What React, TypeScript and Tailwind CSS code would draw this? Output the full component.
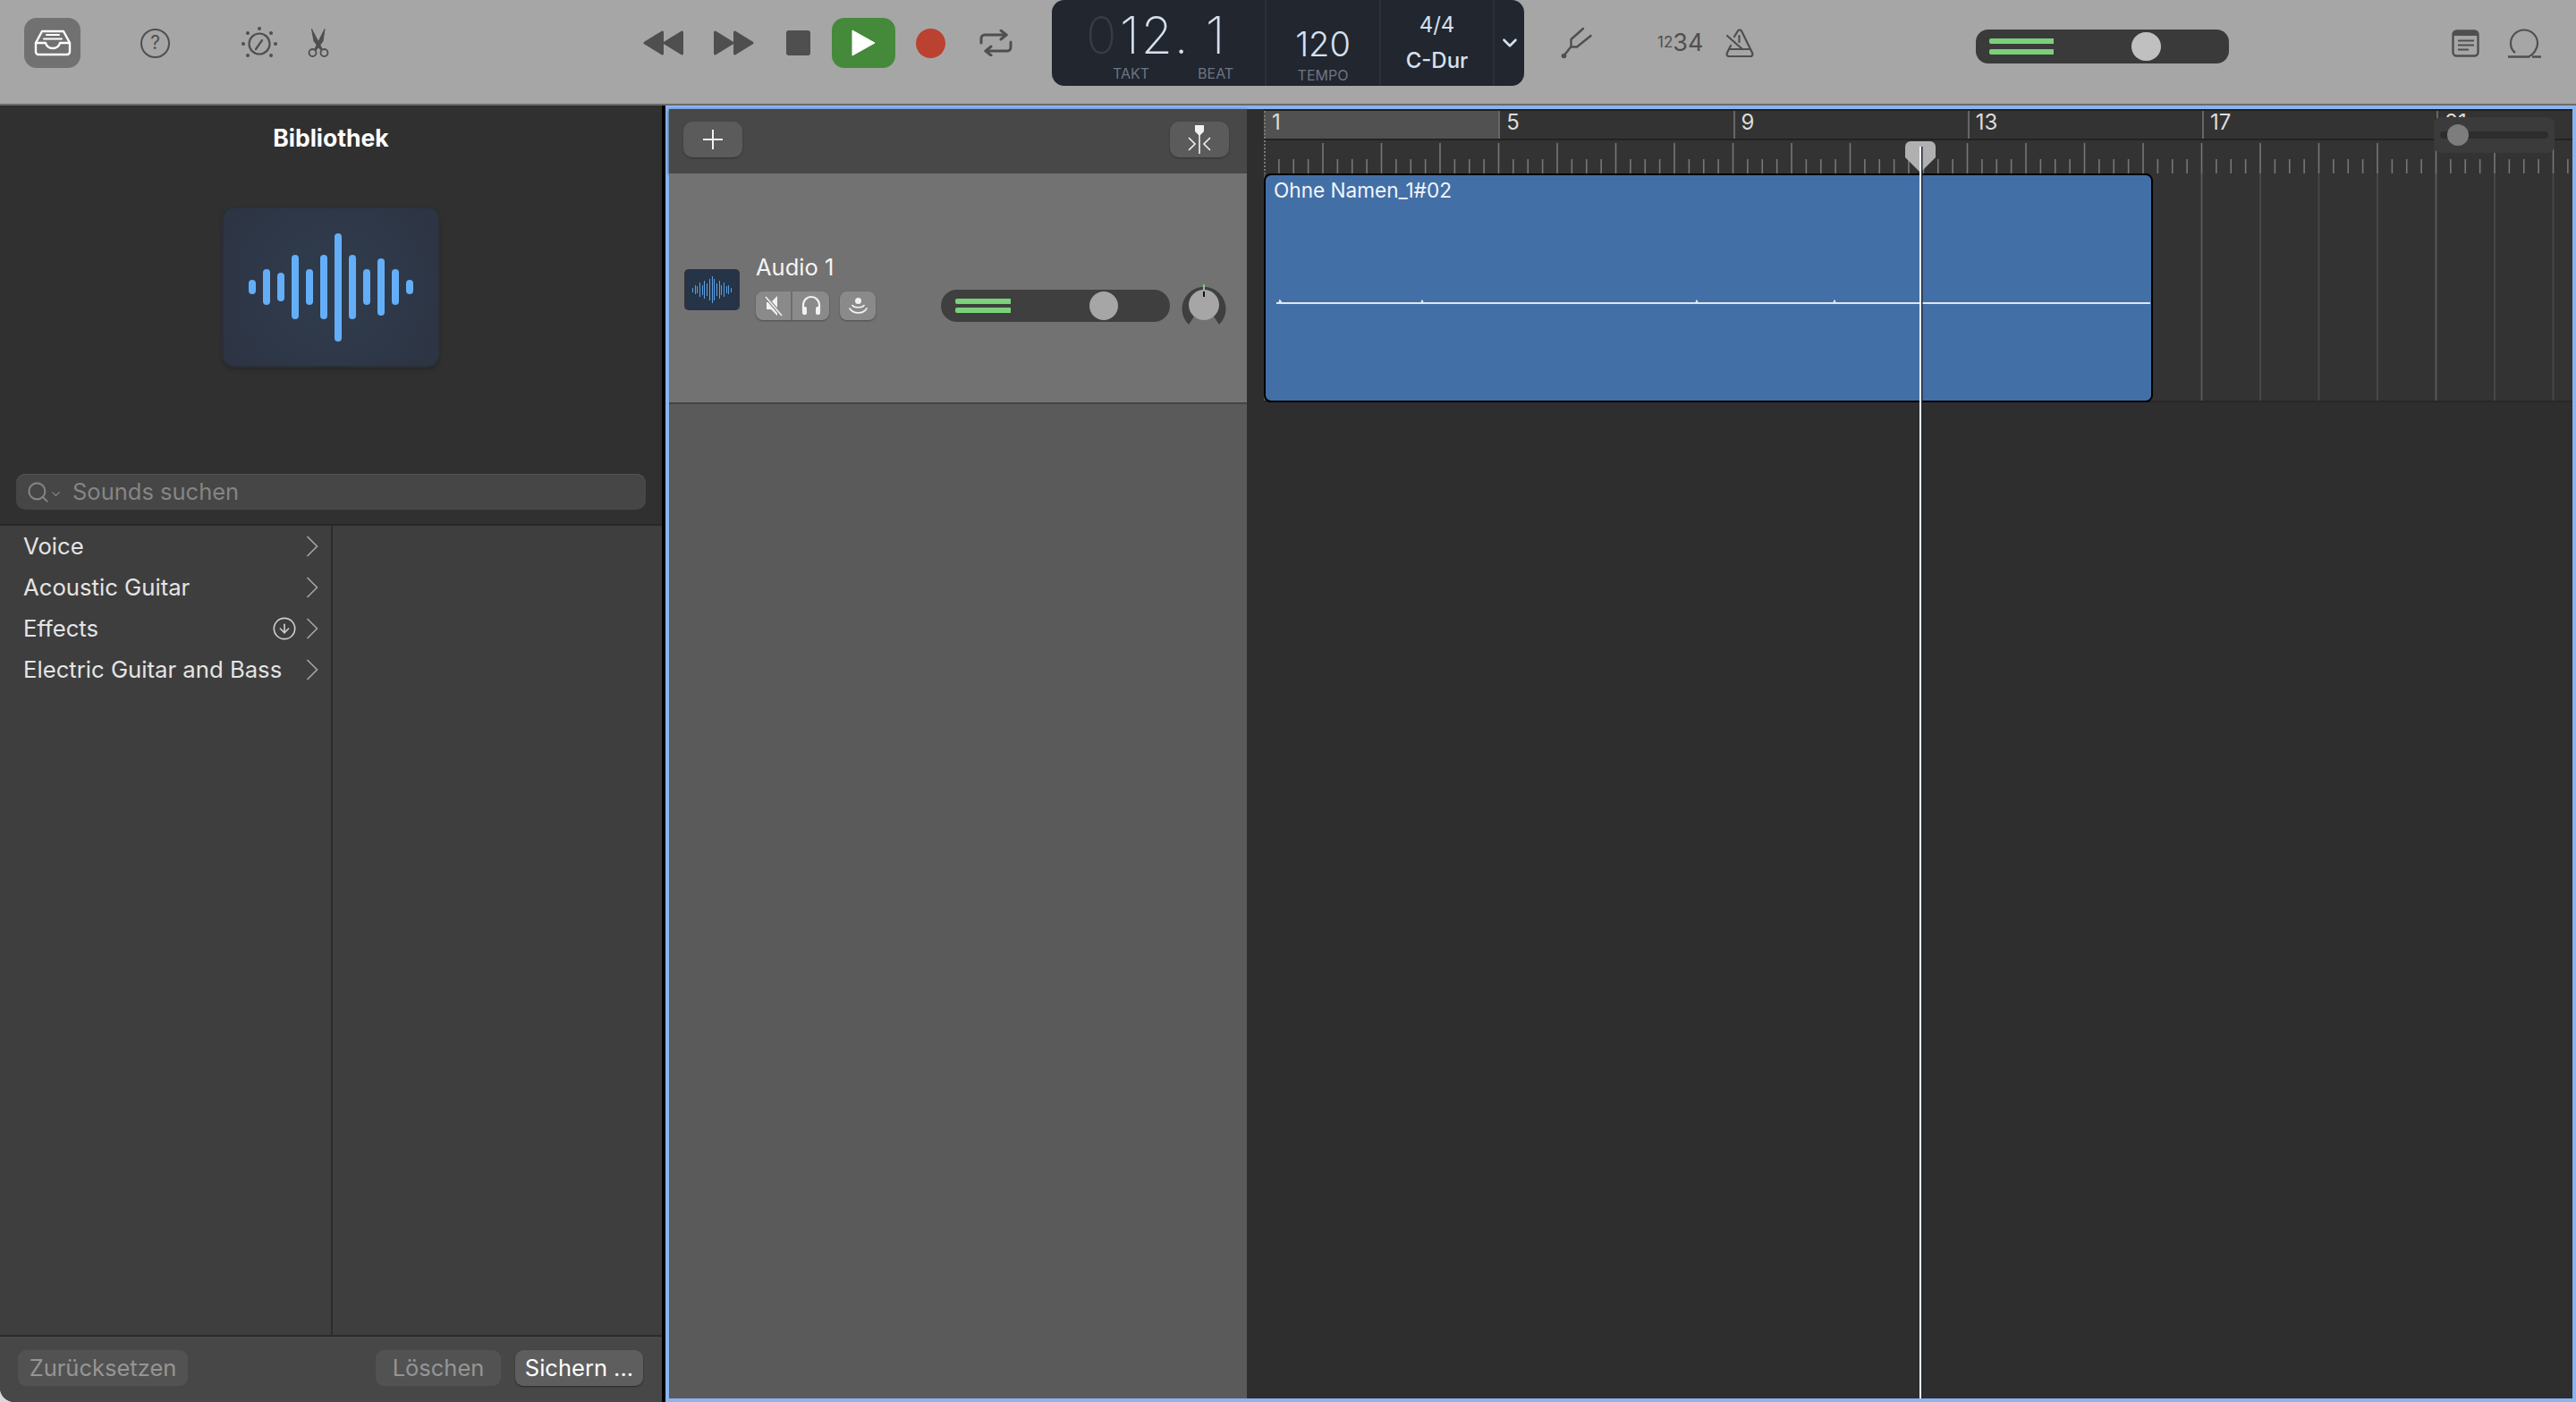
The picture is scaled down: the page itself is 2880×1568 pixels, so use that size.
import { CircleArrowDown, Search, ChevronDown } from "lucide-react";

const ICON = "#4f4f4f";
const barNumbers = [1, 5, 9, 13, 17, 21];
const libraryRows = ["Voice", "Acoustic Guitar", "Effects", "Electric Guitar and Bass"];
const bigWave = [16, 40, 32, 72, 40, 72, 121, 72, 40, 64, 40, 16];
const smallWave = [5, 10, 8, 16, 11, 20, 14, 24, 30, 24, 14, 20, 11, 16, 8, 10, 5];

function InboxIcon() {
  return (
    <svg width="42" height="30" viewBox="0 0 42 30" fill="none" stroke="#fff" strokeWidth="2.4" strokeLinejoin="round" strokeLinecap="round">
      <path d="M9 2H33L40 15V25a3 3 0 0 1-3 3H5a3 3 0 0 1-3-3V15Z" />
      <path d="M2 15H13c1 4 4 6 8 6s7-2 8-6H40" />
      <path d="M14 6H28M11 10.500H31" strokeWidth="2" />
    </svg>
  );
}

function KnobIcon() {
  return (
    <svg width="40" height="36" viewBox="0 0 40 36" fill="none" stroke={ICON} strokeWidth="2.2">
      <circle cx="20" cy="19" r="11.500" />
      <path d="M16 25L23 15" strokeLinecap="round" />
      <g fill={ICON} stroke="none">
        <circle cx="20" cy="2" r="2" />
        <circle cx="7" cy="7" r="2" />
        <circle cx="33" cy="7" r="2" />
        <circle cx="2" cy="19" r="2" />
        <circle cx="38" cy="19" r="2" />
        <circle cx="7" cy="32" r="2" />
        <circle cx="33" cy="32" r="2" />
      </g>
    </svg>
  );
}

function ScissorsIcon() {
  return (
    <svg width="24" height="32" viewBox="0 0 24 32" fill="none" stroke={ICON} strokeWidth="1.800">
      <circle cx="5.500" cy="27" r="4" />
      <circle cx="18.500" cy="27" r="4" />
      <path d="M7.500 23.500L19 0.500L17 14L9.500 24" fill={ICON} strokeLinejoin="round" strokeWidth="1" />
      <path d="M16.500 23.500L4.500 0.500L7 14L14.500 24" fill={ICON} strokeLinejoin="round" strokeWidth="1" />
    </svg>
  );
}

function SkipIcon({ back }: { back?: boolean }) {
  return (
    <svg width="46" height="30" viewBox="0 0 46 30" fill={ICON} stroke={ICON} strokeWidth="3" strokeLinejoin="round" className={back ? "rotate-180" : ""}>
      <path d="M2.500 3L22 15L2.500 27Z" />
      <path d="M24.500 3L44 15L24.500 27Z" />
    </svg>
  );
}

function CycleIcon() {
  return (
    <svg width="37" height="30" viewBox="0 0 37 30" fill="none" stroke={ICON} strokeWidth="3" strokeLinecap="round" strokeLinejoin="round">
      <path d="M2 15V10a4 4 0 0 1 4-4H30" />
      <path d="M24 1L30 6L24 11" />
      <path d="M35 14V20a4 4 0 0 1-4 4H7" />
      <path d="M13 19L7 24L13 29" />
    </svg>
  );
}

function ForkIcon() {
  return (
    <svg width="36" height="36" viewBox="0 0 36 36" fill="none" stroke={ICON} strokeWidth="2.400" strokeLinecap="round" strokeLinejoin="round">
      <path d="M25 2L11.500 14V22L3 33" />
      <path d="M11.500 22.500H18L33.500 10" />
      <circle cx="3.500" cy="32.500" r="2.800" fill={ICON} stroke="none" />
    </svg>
  );
}

function MetronomeIcon() {
  return (
    <svg width="32" height="32" viewBox="0 0 32 32" fill="none" stroke={ICON} strokeWidth="2.200" strokeLinejoin="round" strokeLinecap="round">
      <path d="M10 9L14 2.500C15 1 17 1 18 2.500L30 27C31 29 30 31 28 31H4C2 31 1 29 2 27L6 19" />
      <path d="M4 23H28" />
      <path d="M2 8L19 23" />
      <path d="M15.500 8V15" />
    </svg>
  );
}

function NotesIcon() {
  return (
    <svg width="31" height="31" viewBox="0 0 31 31" fill="none">
      <rect x="1.500" y="1.500" width="28" height="28" rx="4" stroke={ICON} strokeWidth="2.400" />
      <path d="M2 5a3 3 0 0 1 3-3H26a3 3 0 0 1 3 3V7H2Z" fill={ICON} />
      <path d="M7 12.500H25M7 17.500H25M7 22.500H19" stroke={ICON} strokeWidth="1.800" />
    </svg>
  );
}

function LoopIcon() {
  return (
    <svg width="37" height="33" viewBox="0 0 37 33" fill="none" stroke={ICON} strokeWidth="2.200">
      <path d="M8 27C4 24 3 20 3 16.500C3 8 10 1.500 18 1.500C26 1.500 33 8 33 16.500C33 22 29 29 23 31.500" />
      <path d="M0 31.500H24M27 31.500H37" strokeWidth="2.400" />
    </svg>
  );
}

function Chevron() {
  return (
    <svg width="14" height="24" viewBox="0 0 14 24" fill="none" stroke="#a5a5a5" strokeWidth="1.600">
      <path d="M1.500 1L12.500 12L1.500 23" />
    </svg>
  );
}

function MuteIcon() {
  return (
    <svg width="22" height="24" viewBox="0 0 22 24" fill="none">
      <path d="M3 8H8L15 1V23L8 16H3Z" fill="#f2f2f2" />
      <path d="M2 2L20 23" stroke="#8a8a8a" strokeWidth="4" />
      <path d="M2 2L20 23" stroke="#f2f2f2" strokeWidth="1.500" />
    </svg>
  );
}

function HeadphoneIcon() {
  return (
    <svg width="24" height="24" viewBox="0 0 24 24" fill="none" stroke="#f2f2f2" strokeWidth="2.200">
      <path d="M3 17V11a9 9 0 0 1 18 0V17" />
      <rect x="2" y="13" width="5" height="9" rx="2" fill="#f2f2f2" stroke="none" />
      <rect x="17" y="13" width="5" height="9" rx="2" fill="#f2f2f2" stroke="none" />
    </svg>
  );
}

function MonitorIcon() {
  return (
    <svg width="21" height="18" viewBox="0 0 21 18" fill="none" stroke="#f2f2f2" strokeWidth="1.600" strokeLinecap="round">
      <circle cx="10.500" cy="3.500" r="3.500" fill="#f2f2f2" stroke="none" />
      <path d="M4 8.500C6 11.500 15 11.500 17 8.500" />
      <path d="M1 12C5 18.500 16 18.500 20 12" />
    </svg>
  );
}

function CatchIcon() {
  return (
    <svg width="26" height="34" viewBox="0 0 26 34" fill="none" stroke="#f2f2f2" strokeWidth="1.600">
      <path d="M8 1H18V8L13 13L8 8Z" fill="#f2f2f2" stroke="none" />
      <path d="M13 10V33" />
      <path d="M1 15L8 22L1 29M25 15L18 22L25 29" />
    </svg>
  );
}

function TrackKnob() {
  return (
    <svg width="50" height="48" viewBox="0 0 50 48" className="shrink-0">
      <path d="M8 47A24.500 24.500 0 1 1 42 47L36 38H14Z" fill="#3f3f3f" />
      <ellipse cx="25" cy="25" rx="17" ry="17" fill="#a6a6a6" />
      <path d="M25 2V8" stroke="#7ad17a" strokeWidth="2" />
      <path d="M25 10V16" stroke="#111" strokeWidth="2" />
    </svg>
  );
}

function LevelBars({ width, height, gap }: { width: string; height: string; gap: string }) {
  return (
    <div className={`flex flex-col ${width} ${gap}`}>
      <div className={`${height} rounded-l-[2px] bg-[#7ad17a]`} />
      <div className={`${height} rounded-l-[2px] bg-[#7ad17a]`} />
    </div>
  );
}

function RulerTicks() {
  const ticks = Array.from({ length: 90 }, (_, i) => i + 1);
  return (
    <svg width="1463" height="37" className="block">
      <line x1="1" x2="1" y1="0" y2="37" stroke="#777" strokeWidth="2" strokeDasharray="2 2" />
      {ticks.map((i) => {
        const x = i * 16.375;
        const isBar = i % 4 === 0;
        return (
          <line key={i} x1={x + 0.5} x2={x + 0.5} y1={isBar ? 3 : 21} y2="37" stroke="#777" strokeWidth="1.600" />
        );
      })}
    </svg>
  );
}

function LaneGrid() {
  const bars = Array.from({ length: 23 }, (_, i) => i);
  return (
    <svg width="1463" height="254" className="absolute left-0 top-0">
      {bars.map((i) => (
        <line key={i} x1={i * 65.5 + 0.5} x2={i * 65.5 + 0.5} y1="0" y2="254" stroke={i % 4 === 0 ? "#575757" : "#474747"} strokeWidth="2" />
      ))}
    </svg>
  );
}

function FooterButton({ label, className }: { label: string; className: string }) {
  return (
    <div className={`flex h-10 items-center justify-center rounded-[9px] text-[25.500px] ${className}`}>{label}</div>
  );
}

function LibraryPanel() {
  return (
    <aside className="flex w-[744px] shrink-0 flex-col overflow-hidden rounded-bl-[16px] border-r-4 border-black bg-[#303030]">
      <div className="flex h-[470px] shrink-0 flex-col items-center border-b-2 border-[#282828] pt-[22px]">
        <h1 className="text-[26.500px] leading-7 font-bold text-white">Bibliothek</h1>
        <div className="mt-[65px] flex h-[176px] w-[240px] items-center justify-center gap-2 rounded-[12px] bg-[radial-gradient(circle,#2f3a4b_30%,#2d3443)] shadow-[0_0_0_2px_#2a2f38,0_3px_5px_#222]">
          {bigWave.map((h, i) => (
            <div key={i} className="w-2 rounded-full bg-[#64aef8]" style={{ height: h }} />
          ))}
        </div>
        <div className="mt-[121px] flex h-10 w-[704px] items-center rounded-[10px] bg-[#464646] pl-[11px] text-[#858585] shadow-[inset_0_1px_0_#555]">
          <Search size={27} strokeWidth={1.8} />
          <ChevronDown size={15} strokeWidth={2} className="ml-[-1px] mt-1" />
          <span className="ml-[11px] text-[25.500px] leading-none">Sounds suchen</span>
        </div>
      </div>

      <div className="flex min-h-0 flex-1 bg-[#3e3e3e]">
        <div className="w-[372px] border-r-2 border-[#2c2c2c]">
          {libraryRows.map((row) => (
            <div key={row} className="flex h-[46px] items-center pl-[26px] pr-[14px] text-[25.700px] text-[#e4e4e4]">
              <span className="flex-1">{row}</span>
              {row === "Effects" && <CircleArrowDown size={28} strokeWidth={1.4} className="mr-[10px] text-[#cfcfcf]" />}
              <Chevron />
            </div>
          ))}
        </div>
      </div>

      <div className="flex h-[75px] shrink-0 border-t-2 border-[#2c2c2c] bg-[#474747] pl-5 pt-[15px]">
        <FooterButton label="Zurücksetzen" className="w-[190px] bg-[#525252] text-[#959595]" />
        <FooterButton label="Löschen" className="ml-[210px] w-[140px] bg-[#525252] text-[#959595]" />
        <FooterButton label="Sichern ..." className="ml-4 w-[143px] bg-[#5e5e5e] text-white shadow-[0_1px_2px_#2b2b2b]" />
      </div>
    </aside>
  );
}

function Transport() {
  return (
    <header className="h-[118px] shrink-0 border-b-2 border-[#6b6b6b] bg-[#a6a6a6] pl-[27px]">
      <div className="flex h-24 items-center">
        <div className="flex h-14 w-[63px] items-center justify-center rounded-[14px] bg-[#717171]">
          <InboxIcon />
        </div>
        <div className="ml-[67px] flex h-[33px] w-[33px] items-center justify-center rounded-full border-2 border-[#4f4f4f] text-[21px] text-[#4f4f4f]">?</div>
        <div className="ml-20"><KnobIcon /></div>
        <div className="ml-[34px]"><ScissorsIcon /></div>

        <div className="ml-[351px]"><SkipIcon back /></div>
        <div className="ml-8"><SkipIcon /></div>
        <div className="ml-9 h-7 w-[27px] rounded-[3px] bg-[#4f4f4f]" />
        <div className="ml-6 flex h-14 w-[71px] items-center justify-center rounded-[14px] bg-[#458a3b]">
          <svg width="27" height="30" viewBox="0 0 27 30"><path d="M1 1L26 15L1 29Z" fill="#fff" stroke="#fff" strokeLinejoin="round" /></svg>
        </div>
        <div className="ml-[23px] h-[33px] w-[33px] rounded-full bg-[#bb4130]" />
        <div className="ml-[38px]"><CycleIcon /></div>

        <div className="ml-[44px] flex h-24 w-[528px] self-start rounded-[14px] bg-[#21262f] text-[#d6e0ee]">
          <div className="w-[240px] border-r-2 border-[#2b303a] pl-[38px]">
            <div className="flex h-[78px] items-center text-[57px] leading-none font-extralight">
              <span className="w-[38px] text-[#363b46]">0</span>
              <span className="tracking-[2px]">12.</span>
              <span className="ml-[17px]">1</span>
            </div>
            <div className="-mt-1 flex text-[16px] leading-4 text-[#6d7583]">
              <span className="ml-[30px]">TAKT</span>
              <span className="ml-[54px]">BEAT</span>
            </div>
          </div>
          <div className="flex w-[128px] flex-col items-center border-r-2 border-[#2b303a] pt-[30px]">
            <span className="text-[38px] leading-[38px] font-light">120</span>
            <span className="mt-[8px] text-[16px] leading-4 text-[#6d7583]">TEMPO</span>
          </div>
          <div className="flex w-[127px] flex-col items-center border-r-2 border-[#2b303a] pt-[14px] text-[24px]">
            <span className="leading-7">4/4</span>
            <span className="mt-[12px] leading-7 font-medium">C-Dur</span>
          </div>
          <div className="flex flex-1 items-center justify-center">
            <ChevronDown size={26} strokeWidth={2.4} />
          </div>
        </div>

        <div className="ml-[41px]"><ForkIcon /></div>
        <div className="ml-[72px] flex w-[52px] items-center whitespace-nowrap text-[#4f4f4f]">
          <span className="text-[17px]">12</span>
          <span className="text-[27px]">34</span>
        </div>
        <div className="ml-6"><MetronomeIcon /></div>

        <div className="ml-[248px] mt-2 flex h-[38px] w-[283px] items-center rounded-[14px] bg-[#3a3a3a] pl-[15px]">
          <LevelBars width="w-[72px]" height="h-[6px]" gap="gap-[6px]" />
          <div className="ml-[87px] h-8 w-[33px] rounded-full bg-[#c0c0c0]" />
        </div>

        <div className="ml-[249px]"><NotesIcon /></div>
        <div className="ml-8"><LoopIcon /></div>
      </div>
    </header>
  );
}

function TrackHeaders() {
  return (
    <div className="flex w-[646px] shrink-0 flex-col bg-[#5a5a5a]">
      <div className="flex h-[72px] shrink-0 items-center justify-between bg-[#484848] pb-1 pl-4 pr-5 shadow-[0_1px_3px_#333]">
        <div className="flex h-10 w-[66px] items-center justify-center rounded-[10px] bg-[#5b5b5b] shadow-[0_1px_2px_#333]">
          <svg width="22" height="22" viewBox="0 0 22 22" stroke="#f2f2f2" strokeWidth="2"><path d="M11 0V22M0 11H22" /></svg>
        </div>
        <div className="flex h-10 w-[66px] items-center justify-center rounded-[10px] bg-[#5b5b5b] shadow-[0_1px_2px_#333]">
          <CatchIcon />
        </div>
      </div>

      <div className="flex h-[258px] shrink-0 items-start border-b-2 border-[#444] bg-[#727272] pl-[18px]">
        <div className="mt-[108px] flex h-11 w-[60px] shrink-0 items-center justify-center gap-[1.700px] rounded-[4px] bg-[#253447] shadow-[0_0_0_1px_#333]">
          {smallWave.map((h, i) => (
            <div key={i} className="w-px bg-[#5aa0e6]" style={{ height: h }} />
          ))}
        </div>
        <div className="ml-[19px] mt-[89px]">
          <div className="text-[25.500px] leading-8 text-[#f4f4f4]">Audio 1</div>
          <div className="mt-[11px] flex">
            <div className="flex h-8 w-[82px] rounded-lg bg-[#8a8a8a] shadow-[0_1px_2px_#4d4d4d]">
              <div className="flex w-[41px] items-center justify-center border-r-2 border-[#6e6e6e]"><MuteIcon /></div>
              <div className="flex flex-1 items-center justify-center"><HeadphoneIcon /></div>
            </div>
            <div className="ml-3 flex h-8 w-10 items-center justify-center rounded-lg bg-[#8a8a8a] shadow-[0_1px_2px_#4d4d4d]">
              <MonitorIcon />
            </div>
          </div>
        </div>
        <div className="ml-[73px] mt-[130px] flex h-9 w-64 shrink-0 items-center rounded-full bg-[#3f3f3f] pl-4">
          <LevelBars width="w-[62px]" height="h-[6px]" gap="gap-1" />
          <div className="ml-[88px] h-8 w-8 rounded-full bg-[#a6a6a6]" />
        </div>
        <div className="ml-[13px] mt-[122px]"><TrackKnob /></div>
      </div>
    </div>
  );
}

function Timeline() {
  return (
    <div className="relative flex min-w-0 flex-1 flex-col bg-[#2e2e2e]">
      <div className="ml-[19px] h-[72px] shrink-0 overflow-hidden border-t-2 border-[#202020] bg-[#333]">
        <div className="flex h-[33px] border-b-2 border-[#222]">
          {barNumbers.map((n, i) => (
            <div
              key={n}
              className={`h-full w-[262.250px] shrink-0 border-l-2 pl-[7px] text-[24px] leading-[26px] text-[#dcdcdc] ${i === 0 ? "border-dotted border-[#777] bg-[#515151]" : "border-[#666]"}`}
            >
              {n}
            </div>
          ))}
        </div>
        <RulerTicks />
      </div>

      <div className="relative ml-[19px] h-[256px] shrink-0 border-b-2 border-[#272727] bg-[#333]">
        <LaneGrid />
        <div className="relative h-[256px] w-[994px] rounded-[8px] border-2 border-black bg-[#436fa7] pl-[9px] pt-1">
          <span className="text-[22.600px] leading-[26px] text-[#f2f5fa]">Ohne Namen_1#02</span>
          <svg width="990" height="8" className="absolute left-0 top-[138px]">
            <path d="M12 5H989M15 5L16 2.500L18 5M174 5L175 3L176 5M481 5L482 3L483 5M635 5L636 3L637 5" stroke="#dde6f2" strokeWidth="2" fill="none" />
          </svg>
        </div>
      </div>

      {/* zoom slider over the ruler */}
      <div className="absolute right-5 top-[9px] flex h-10 w-[135px] items-center rounded-[8px] bg-[#3b3b3b] px-[7px]">
        <div className="h-2 flex-1 rounded-full bg-[#2d2d2d] pl-2">
          <div className="-mt-2 h-6 w-6 rounded-full bg-[#7d7d7d]" />
        </div>
      </div>

      {/* playhead */}
      <div className="absolute bottom-0 left-[736px] top-9 flex w-[34px] justify-center">
        <svg width="34" height="36" viewBox="0 0 34 36" className="absolute left-0 top-0">
          <path d="M6 0H28a6 6 0 0 1 6 6V18L17 35L0 18V6a6 6 0 0 1 6-6Z" fill="#b0b0b0" />
        </svg>
        <div className="relative mt-[6px] w-[2px] bg-white shadow-[1.500px_0_0_#1f2a3a]" />
      </div>
    </div>
  );
}

export default function App() {
  return (
    <div className="flex h-screen w-screen flex-col overflow-hidden bg-[#d8d8d8] [font-family:Inter,'Noto_Sans',sans-serif]">
      <Transport />
      <div className="flex min-h-0 flex-1">
        <LibraryPanel />
        <main className="flex min-w-0 flex-1 border-4 border-[#8ab4f0]">
          <TrackHeaders />
          <Timeline />
        </main>
      </div>
    </div>
  );
}
